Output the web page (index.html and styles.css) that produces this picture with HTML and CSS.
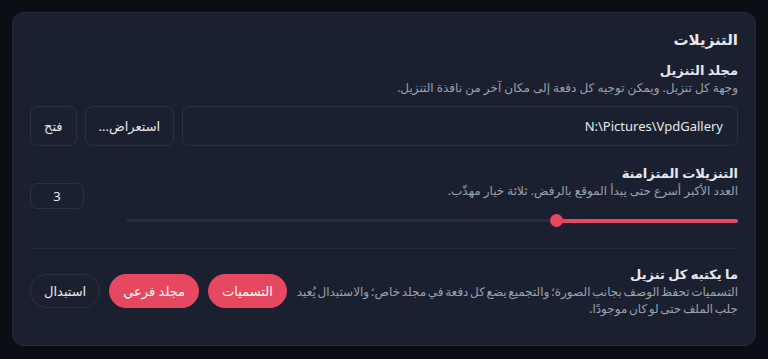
FILE: index.html
```html
<!DOCTYPE html>
<html lang="ar" dir="rtl">

<head>
    <meta charset="UTF-8">
    <meta name="viewport" content="width=device-width, initial-scale=1.0">
    <title>التنزيلات</title>
    <link rel="stylesheet" href="styles.css">
</head>

<body>
    <section class="card">
        <h2 class="card-title">التنزيلات</h2>

        <div class="field">
            <b class="field-label">مجلد التنزيل</b>
            <p class="field-hint">وجهة كل تنزيل. ويمكن توجيه كل دفعة إلى مكان آخر من نافذة التنزيل.</p>
            <div class="path-row">
                <div class="path-input" dir="ltr">N:\Pictures\VpdGallery</div>
                <button class="btn">استعراض...</button>
                <button class="btn">فتح</button>
            </div>
        </div>

        <div class="field field-row concurrent">
            <div class="field-main">
                <b class="field-label">التنزيلات المتزامنة</b>
                <p class="field-hint">العدد الأكبر أسرع حتى يبدأ الموقع بالرفض. ثلاثة خيار مهذّب.</p>
                <div class="slider">
                    <div class="slider-fill" style="width: 29%"></div>
                    <div class="slider-thumb" style="right: calc(29% + 4px)"></div>
                </div>
            </div>
            <div class="side">
                <div class="number-box">3</div>
            </div>
        </div>

        <hr class="divider">

        <div class="field field-row">
            <div class="field-main">
                <b class="field-label">ما يكتبه كل تنزيل</b>
                <p class="field-hint tight">التسميات تحفظ الوصف بجانب الصورة؛ والتجميع يضع كل دفعة في مجلد خاص؛ والاستبدال يُعيد جلب الملف حتى لو كان موجودًا.</p>
            </div>
            <div class="pill-group">
                <button class="pill pill-on">التسميات</button>
                <button class="pill pill-on">مجلد فرعي</button>
                <button class="pill">استبدال</button>
            </div>
        </div>
    </section>
</body>

</html>
```

FILE: styles.css
```css
html,
body {
    margin: 0;
    height: 100%;
    overflow: hidden;
}

body {
    padding: 12px;
    box-sizing: border-box;
    background-color: #0b0e14;
    font-family: "Noto Sans", "DejaVu Sans", sans-serif;
    color: #e6e8ec;
}

.card {
    height: 334px;
    box-sizing: border-box;
    background-color: #1b2030;
    border: 1px solid #252b3a;
    border-radius: 12px;
    padding: 16px 17px 20px 17px;
}

.card-title {
    margin: 0 0 12px 0;
    font-size: 15px;
    font-weight: 700;
    line-height: 20px;
}

.field-label {
    display: block;
    font-size: 13px;
    font-weight: 700;
    line-height: 18px;
}

.field-hint {
    margin: 0;
    font-size: 12px;
    line-height: 17px;
    color: #9aa1ad;
}

.field-hint.tight {
    word-spacing: -1.5px;
}

.path-row {
    display: flex;
    gap: 8px;
    margin-top: 10px;
}

.path-input {
    flex: 1;
    height: 40px;
    box-sizing: border-box;
    border: 1px solid #2a3142;
    border-radius: 8px;
    padding: 0 14px;
    display: flex;
    align-items: center;
    justify-content: flex-end;
    font-size: 13px;
}

.btn {
    height: 40px;
    padding: 0 13px;
    font-family: inherit;
    font-size: 13px;
    font-weight: 400;
    color: #e6e8ec;
    background: transparent;
    border: 1px solid #2a3142;
    border-radius: 8px;
}

.field-row {
    display: flex;
    align-items: center;
}

.field-main {
    flex: 1;
}

.concurrent {
    margin-top: 18px;
}

.slider {
    position: relative;
    height: 3px;
    margin-top: 20px;
    margin-bottom: 6px;
    background-color: #252c3a;
    border-radius: 2px;
}

.slider-fill {
    height: 4px;
    margin-top: -0.5px;
    background-color: #e5485f;
    border-radius: 2px;
}

.slider-thumb {
    position: absolute;
    top: -5px;
    width: 13px;
    height: 13px;
    margin-right: -6px;
    border-radius: 50%;
    background-color: #e5485f;
}

.side {
    width: 96px;
    display: flex;
    justify-content: flex-end;
}

.number-box {
    width: 54px;
    height: 26px;
    box-sizing: border-box;
    border: 1px solid #2a3142;
    border-radius: 7px;
    display: flex;
    align-items: center;
    justify-content: center;
    font-size: 13px;
}

.divider {
    border: none;
    border-top: 1px solid #242a38;
    margin: 20px 0 16px 0;
}

.pill-group {
    display: flex;
    gap: 9px;
    margin-right: 10px;
}

.pill {
    height: 34px;
    padding: 0 13px;
    font-family: inherit;
    font-size: 13px;
    font-weight: 400;
    color: #e6e8ec;
    background: transparent;
    border: 1px solid #2a3142;
    border-radius: 17px;
}

.pill-on {
    background-color: #e5485f;
    border-color: #e5485f;
    color: #fff;
}
```
